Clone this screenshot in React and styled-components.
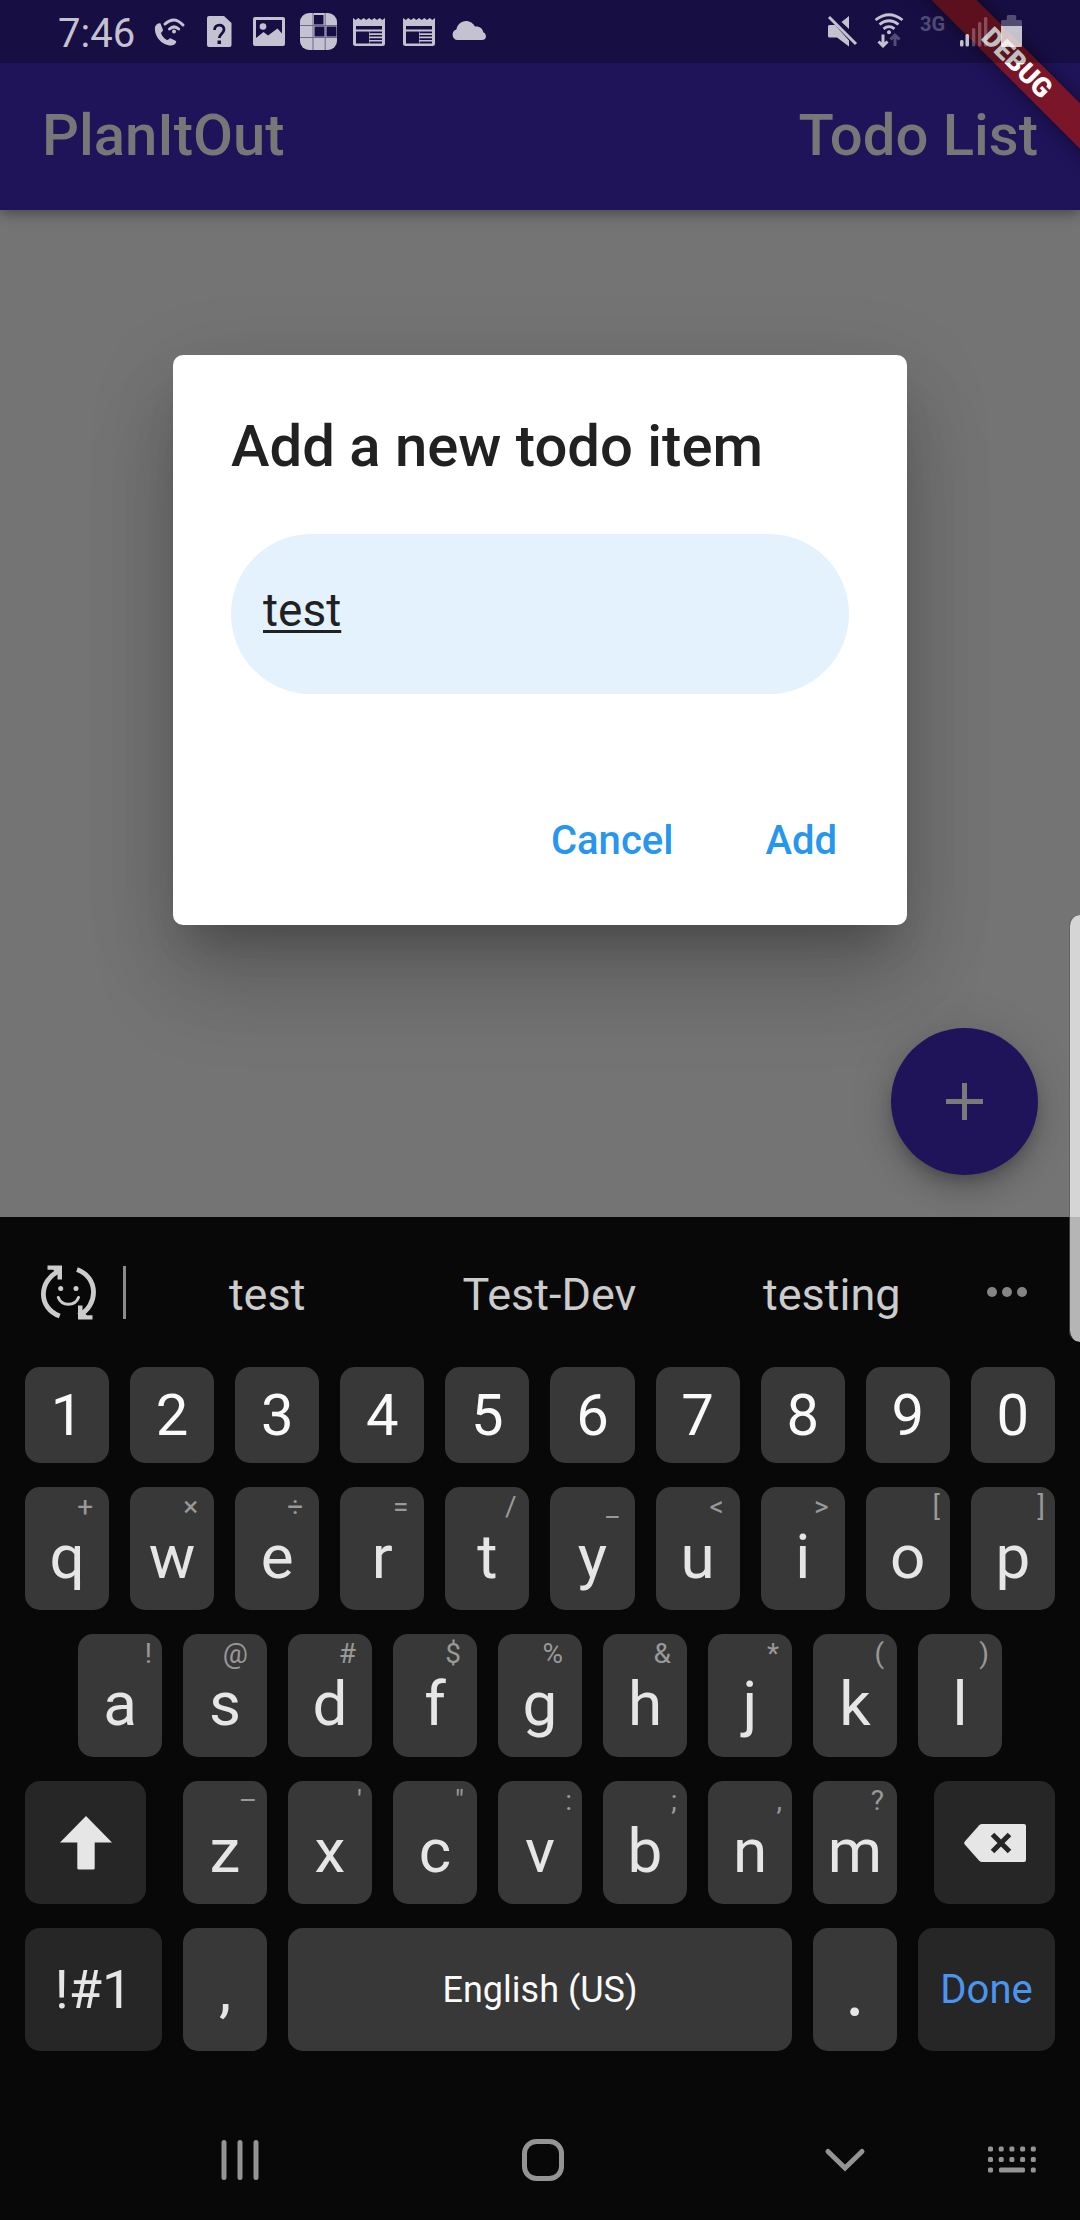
import React, { useState } from 'react';
import styled, { createGlobalStyle } from 'styled-components';

const GlobalStyle = createGlobalStyle`
  *, *::before, *::after { box-sizing: border-box; }
  body {
    margin: 0;
    background: #747474;
    font-family: Roboto, "Noto Sans", sans-serif;
  }
  button, input {
    margin: 0;
    padding: 0;
    border: 0;
    outline: 0;
    background: none;
    color: inherit;
    font: inherit;
  }
  button { cursor: pointer; }
  svg { display: block; flex: none; }
`;

const Page = styled.div`
  position: relative;
  display: flex;
  flex-direction: column;
  min-height: 100vh;
  overflow: hidden;
`;

/* ---------- header ---------- */

const Header = styled.header`
  position: relative;
  background: #1f135a;
  box-shadow: 0 4px 12px rgba(0, 0, 0, 0.35);
`;

const StatusBar = styled.div`
  position: relative;
  z-index: 2;
  display: flex;
  align-items: center;
  justify-content: space-between;
  height: 63px;
  padding: 1px 57px 0 58px;
  background: rgba(0, 0, 0, 0.25);
  color: rgba(255, 255, 255, 0.75);
`;

const StatusGroup = styled.div`
  display: flex;
  align-items: center;
  gap: 12px;
  height: 38px;
`;

const Clock = styled.time`
  padding: 4px 3px 0 0;
  font-size: 40px;
  line-height: 48px;
`;

const NetworkType = styled.span`
  align-self: flex-start;
  width: 28px;
  font-size: 20px;
  font-weight: 700;
  line-height: 22px;
  color: rgba(255, 255, 255, 0.27);
`;

const AppBar = styled.div`
  display: flex;
  align-items: center;
  justify-content: space-between;
  height: 147px;
  padding: 0 42px 3px;
  color: #777777;
`;

const AppTitle = styled.h1`
  margin: 0;
  font-size: 58px;
  font-weight: 500;
  line-height: 68px;
`;

const RibbonCorner = styled.div`
  position: absolute;
  z-index: 1;
  top: 0;
  right: 0;
  width: 210px;
  height: 210px;
  overflow: hidden;
`;

const Ribbon = styled.div`
  position: absolute;
  top: 47px;
  right: -87px;
  width: 300px;
  transform: rotate(45deg);
  background: #7b1628;
  box-shadow: 0 0 16px rgba(0, 0, 0, 0.5);
  color: #ffffff;
  font-size: 27px;
  font-weight: 900;
  line-height: 32px;
  text-align: center;
`;

/* ---------- dialog ---------- */

const Main = styled.main`
  display: flex;
  flex: 1;
  flex-direction: column;
  align-items: center;
  padding-top: 145px;
`;

const Dialog = styled.form`
  width: 100%;
  max-width: 734px;
  border-radius: 10px;
  background: #ffffff;
  box-shadow:
    0 29px 39px -18px rgba(0, 0, 0, 0.2),
    0 63px 90px 0 rgba(0, 0, 0, 0.14),
    0 24px 90px 4px rgba(0, 0, 0, 0.12);
`;

const DialogBody = styled.div`
  display: flex;
  flex-direction: column;
  gap: 55px;
  padding: 58px 58px 0;
`;

const DialogTitle = styled.label`
  color: #212121;
  font-size: 58px;
  font-weight: 500;
  line-height: 66px;
`;

const TodoInput = styled.input`
  width: 100%;
  height: 160px;
  padding: 0 32px 8px;
  border-radius: 80px;
  background: #e3f2fd;
  color: #212121;
  font-size: 46px;
  text-decoration: underline;
  text-decoration-thickness: 3px;
  text-decoration-skip-ink: none;
  text-underline-offset: 4px;
`;

const DialogActions = styled.div`
  display: flex;
  justify-content: flex-end;
  gap: 28px;
  padding: 99px 38px 38px;
`;

const TextButton = styled.button`
  height: 94px;
  padding: 0 32px;
  color: #2796ee;
  font-size: 40px;
  font-weight: 500;
`;

const Fab = styled.button`
  display: grid;
  place-items: center;
  align-self: flex-end;
  width: 147px;
  height: 147px;
  margin: auto 42px 42px;
  border-radius: 50%;
  background: #1f135a;
  box-shadow:
    0 8px 13px -3px rgba(0, 0, 0, 0.2),
    0 16px 26px rgba(0, 0, 0, 0.14),
    0 3px 47px rgba(0, 0, 0, 0.12);
  color: #7a7a7a;
`;

const EdgeHandle = styled.div`
  position: absolute;
  z-index: 3;
  top: 915px;
  right: 0;
  width: 11px;
  height: 427px;
  border-left: 1px solid rgba(90, 90, 90, 0.6);
  border-radius: 16px 0 0 16px;
  background: rgba(255, 255, 255, 0.7);
  background-clip: padding-box;
`;

/* ---------- keyboard ---------- */

const Keyboard = styled.section`
  background: #080808;
  color: #e6e6e6;
`;

const SuggestionBar = styled.div`
  display: flex;
  align-items: center;
  height: 150px;
  padding: 0 52px 0 41px;
  color: #cccccc;
`;

const Divider = styled.span`
  width: 3px;
  height: 53px;
  margin-left: 27px;
  background: #8a8a8a;
`;

const Suggestions = styled.div`
  display: flex;
  flex: 1;
  padding: 6px 13px 0 0;
`;

const Suggestion = styled.button`
  flex: 1 1 0;
  font-size: 45px;
  line-height: 52px;
`;

const IconButton = styled.button`
  color: ${(p) => p.$color || 'inherit'};
`;

const KeyRows = styled.div`
  display: flex;
  flex-direction: column;
  gap: 24px;
  padding: 0 25px;
`;

const KeyRow = styled.div`
  display: flex;
  gap: 21px;
  height: ${(p) => (p.$short ? '96px' : '123px')};
  padding: 0 ${(p) => (p.$inset ? '53px' : '0')};
`;

const Key = styled.button`
  display: flex;
  flex: ${(p) => p.$grow || 84} 1 0;
  align-items: center;
  justify-content: center;
  min-width: 0;
  border-radius: 15px;
  background: ${(p) => (p.$dark ? '#262626' : '#383838')};
  color: ${(p) => p.$color || '#e6e6e6'};
  font-size: ${(p) => p.$size || 58}px;
`;

const ShiftKey = styled(Key)`
  margin-right: 16px;
`;

const BackspaceKey = styled(Key)`
  margin-left: 16px;
`;

const LetterKey = styled(Key)`
  flex-direction: column;
  justify-content: flex-start;
`;

const hintPadding = { thin: '10px', mid: '13px', full: '16px', wide: '19px' };

const Hint = styled.span`
  align-self: flex-end;
  padding-right: ${(p) => hintPadding[p.$fit]};
  color: #999999;
  font-size: 28px;
  line-height: 40px;
`;

const Letter = styled.span`
  font-size: 62px;
  line-height: 60px;
`;

const NavBar = styled.nav`
  display: flex;
  align-items: center;
  height: 120px;
  margin-top: 49px;
  padding: 0 32px 0 204px;
  color: #949494;
`;

const NavMain = styled.div`
  display: flex;
  flex: 1;
  justify-content: space-between;
  margin-right: 95px;
`;

const NavButton = styled.button`
  display: grid;
  place-items: center;
  width: 72px;
  height: 72px;
`;

/* ---------- status icons ---------- */

const StatusIcon = ({ x = 0, width = 38, children }) => (
  <svg width={width} height="38" viewBox={`${x} 13 ${width} 38`} fill="currentColor" aria-hidden="true">
    {children}
  </svg>
);

const WifiCallIcon = () => (
  <StatusIcon x={150}>
    <path d="M155 27c1-3 4-4.500 5.500-3.500l2.500 6.500c.3 1-1.500 2-2 3 1 3 3 5.500 6 7 1.200.4 2.300-2 3.500-1.700l5.500 2.700c1 1.200-1.500 4.500-5 4.500-9 0-17-9-16-18.500z" />
    <path d="M165 24q9-8.500 18 1M169.500 29q4.500-4.200 9.200 0" fill="none" stroke="currentColor" strokeWidth="3" strokeLinecap="round" />
    <circle cx="174" cy="31.500" r="2" />
  </StatusIcon>
);

const UnknownSimIcon = () => (
  <StatusIcon x={200}>
    <path d="M209 16h15l7.500 7v22a2 2 0 0 1-2 2H209a2 2 0 0 1-2-2V18a2 2 0 0 1 2-2z" />
    <path d="M214.500 30c0-6.500 9.500-6.500 9.500-.5 0 4-4.700 4.500-4.700 8.500" fill="none" stroke="#180e43" strokeWidth="2.800" />
    <rect x="217.500" y="40.500" width="3.500" height="3.500" fill="#180e43" />
  </StatusIcon>
);

const ImageIcon = () => (
  <StatusIcon x={250}>
    <path fillRule="evenodd" d="M255 17h28a2 2 0 0 1 2 2v25a2 2 0 0 1-2 2h-28a2 2 0 0 1-2-2V19a2 2 0 0 1 2-2zm1 3v18l7.500-6 4.500 3.500 9.500-7 4.500 5V20z" />
    <circle cx="263" cy="26.500" r="3.300" />
  </StatusIcon>
);

const GridIcon = () => (
  <StatusIcon x={300}>
    <rect x="300" y="13" width="37" height="37" rx="9" />
    <path d="M314 15h9.500v9.500H314zM314.500 26.500h10v10h-10zM326.500 26.500h10v10h-10z" fill="#180e43" />
    <path d="M313 13v37M325.200 13v37M300 25.500h37M300 37.500h37" stroke="#6f688f" strokeWidth="1" />
  </StatusIcon>
);

const NewsIcon = ({ x }) => (
  <StatusIcon x={x}>
    <g transform={`translate(${x} 0)`}>
      <path fillRule="evenodd" d="M3 18l2.700 2 2.600-2 2.700 2 2.700-2 2.600 2 2.700-2 2.700 2 2.600-2 2.700 2 2.700-2 2.600 2 2.700-2v25.500a2.500 2.500 0 0 1-2.500 2.500h-27A2.500 2.500 0 0 1 3 43.500zM6 26v3.500h26V26zm0 5.500v12h13v-12z" />
      <path d="M19.500 31.500H32v1.800H19.500zM19.500 35H32v1.600H19.500zM19.500 38.300H32v1.600H19.500zM19.500 41.600H32v1.900H19.500z" fill="#180e43" />
    </g>
  </StatusIcon>
);

const CloudIcon = () => (
  <StatusIcon x={450}>
    <path d="M457 40a5.500 5.500 0 0 1-.6-10.600c1-4.800 4.600-8.400 9.600-8.400 4 0 7.300 2.300 9 5.600 4.500-.6 7.700 2 8.300 5.600 3.500 1.200 4 7.800-1.300 7.800z" />
  </StatusIcon>
);

const MuteIcon = () => (
  <StatusIcon x={824} width={36}>
    <path d="M849 16v13l-7.500-7zM829.500 25h5.500l14 15.500v6l-12-9h-7.500a1.500 1.500 0 0 1-1.500-1.500v-9.500a1.500 1.500 0 0 1 1.500-1.500z" />
    <path d="M829 17l27 27" stroke="currentColor" strokeWidth="3" />
  </StatusIcon>
);

const WifiIcon = () => (
  <StatusIcon x={872} width={36}>
    <path d="M875.500 20q13.500-10.500 27 0M879.500 24.500q9.500-7.500 19 0M883.500 28.800q5.500-4.300 11 0" fill="none" stroke="currentColor" strokeWidth="2.800" />
    <circle cx="889" cy="32.300" r="2" />
    <path d="M883 34.500V46M878.500 41.500l4.500 4.500 4.500-4.500" fill="none" stroke="currentColor" strokeWidth="3" />
    <path d="M895 46V35M890.500 39.500l4.500-4.500 4.500 4.500" fill="none" stroke="currentColor" strokeWidth="3" opacity="0.350" />
  </StatusIcon>
);

const SignalIcon = () => (
  <StatusIcon x={960} width={29}>
    <rect x="960" y="40" width="3.500" height="6.500" rx="1.500" />
    <rect x="965.500" y="34" width="3.500" height="12.500" rx="1.500" />
    <g opacity="0.350">
      <rect x="972" y="28" width="3.300" height="18.500" rx="1.500" />
      <rect x="978" y="22" width="3.300" height="24.500" rx="1.500" />
      <rect x="984" y="17" width="3.300" height="29.500" rx="1.500" />
    </g>
  </StatusIcon>
);

const BatteryIcon = () => (
  <StatusIcon x={1001} width={22}>
    <path d="M1006.700 20v-3.500a1.500 1.500 0 0 1 1.500-1.500h6.500a1.500 1.500 0 0 1 1.500 1.500V20h4.300a1.500 1.500 0 0 1 1.500 1.500V26h-21v-4.500a1.500 1.500 0 0 1 1.500-1.500z" opacity="0.350" />
    <path d="M1001 26h21v19.500a1.500 1.500 0 0 1-1.500 1.500h-18a1.500 1.500 0 0 1-1.500-1.500z" />
  </StatusIcon>
);

/* ---------- keyboard icons ---------- */

const EmojiSwitchIcon = () => (
  <svg width="55" height="56" viewBox="0 0 55 56" fill="none" stroke="currentColor" aria-hidden="true">
    <path d="M18.500 6.500C-3 17-3 44 18.700 52" strokeWidth="4.800" />
    <path d="M36 5.500c21.500 7.500 22 36 1.500 46" strokeWidth="4.800" />
    <path d="M6.500 1.500h14.500v14h-4.500V9.500L12 5.800H6.500zM37 41.500v14h14.500v-4.300H46l-4.500-3.500v-6.200z" fill="currentColor" stroke="none" />
    <circle cx="19.700" cy="24.500" r="2.500" fill="currentColor" stroke="none" />
    <circle cx="35" cy="24.500" r="2.500" fill="currentColor" stroke="none" />
    <path d="M17.300 33.500c3.500 9 16.700 9 20.200 0" strokeWidth="3" strokeLinecap="round" />
  </svg>
);

const MoreIcon = () => (
  <svg width="42" height="12" viewBox="0 0 42 12" fill="currentColor" aria-hidden="true">
    <circle cx="6" cy="6" r="5" />
    <circle cx="21" cy="6" r="5" />
    <circle cx="36" cy="6" r="5" />
  </svg>
);

const ShiftIcon = () => (
  <svg width="52" height="54" viewBox="0 0 52 54" fill="currentColor" aria-hidden="true">
    <path d="M26 0l26 26.500H34.700V52a1.500 1.500 0 0 1-1.500 1.500H18.800a1.500 1.500 0 0 1-1.500-1.500V26.500H0z" />
  </svg>
);

const BackspaceIcon = () => (
  <svg width="62" height="38" viewBox="0 0 62 38" fill="currentColor" aria-hidden="true">
    <path d="M18 0h42a2 2 0 0 1 2 2v34a2 2 0 0 1-2 2H18q-1.500 0-2.800-1.300L.8 20.500q-1.200-1.500 0-3L15.200 1.300Q16.500 0 18 0z" />
    <path d="M28.500 10.500l17 17M45.500 10.500l-17 17" stroke="#262626" strokeWidth="5" />
  </svg>
);

const RecentsIcon = () => (
  <svg width="38" height="42" viewBox="0 0 38 42" stroke="currentColor" strokeWidth="5" strokeLinecap="round" aria-hidden="true">
    <path d="M3 3.500v35M19 3.500v35M35 3.500v35" />
  </svg>
);

const HomeIcon = () => (
  <svg width="42" height="42" viewBox="0 0 42 42" fill="none" stroke="currentColor" strokeWidth="5" aria-hidden="true">
    <rect x="2.500" y="2.500" width="37" height="37" rx="12" />
  </svg>
);

const ChevronIcon = () => (
  <svg width="42" height="26" viewBox="0 0 42 26" fill="none" stroke="currentColor" strokeWidth="5" strokeLinecap="round" aria-hidden="true">
    <path d="M4 4.500l17 16.500 17-16.500" />
  </svg>
);

const KeyboardIcon = () => (
  <svg width="48" height="28" viewBox="0 0 48 28" fill="currentColor" aria-hidden="true">
    {[0, 10.7, 21.4, 32.1, 42.8].map((x) => (
      <React.Fragment key={x}>
        <rect x={x} y="0.500" width="5" height="5" rx="1.500" />
        <rect x={x} y="11" width="5" height="5" rx="1.500" />
      </React.Fragment>
    ))}
    <rect x="0" y="21.500" width="5" height="5" rx="1.500" />
    <rect x="11" y="21.500" width="26" height="5" rx="1.500" />
    <rect x="42.800" y="21.500" width="5" height="5" rx="1.500" />
  </svg>
);

/* ---------- key data ---------- */

const digits = ['1', '2', '3', '4', '5', '6', '7', '8', '9', '0'];

const topRow = [
  ['q', '+', 'full'], ['w', '×', 'full'], ['e', '÷', 'full'], ['r', '=', 'full'], ['t', '/', 'mid'],
  ['y', '_', 'full'], ['u', '<', 'full'], ['i', '>', 'full'], ['o', '[', 'thin'], ['p', ']', 'thin'],
];

const homeRow = [
  ['a', '!', 'thin'], ['s', '@', 'wide'], ['d', '#', 'full'], ['f', '$', 'full'], ['g', '%', 'wide'],
  ['h', '&', 'full'], ['j', '*', 'mid'], ['k', '(', 'mid'], ['l', ')', 'mid'],
];

const bottomRow = [
  ['z', '–', 'thin'], ['x', "'", 'thin'], ['c', '"', 'mid'], ['v', ':', 'thin'],
  ['b', ';', 'thin'], ['n', ',', 'thin'], ['m', '?', 'mid'],
];

const letterKeys = (row) =>
  row.map(([letter, hint, fit]) => (
    <LetterKey key={letter} type="button">
      <Hint $fit={fit}>{hint}</Hint>
      <Letter>{letter}</Letter>
    </LetterKey>
  ));

export default function App() {
  const [todo, setTodo] = useState('test');

  return (
    <Page>
      <GlobalStyle />
      <Header>
        <StatusBar>
          <StatusGroup>
            <Clock>7:46</Clock>
            <WifiCallIcon />
            <UnknownSimIcon />
            <ImageIcon />
            <GridIcon />
            <NewsIcon x={350} />
            <NewsIcon x={400} />
            <CloudIcon />
          </StatusGroup>
          <StatusGroup>
            <MuteIcon />
            <WifiIcon />
            <NetworkType>3G</NetworkType>
            <SignalIcon />
            <BatteryIcon />
          </StatusGroup>
        </StatusBar>
        <AppBar>
          <AppTitle>PlanItOut</AppTitle>
          <AppTitle as="span">Todo List</AppTitle>
        </AppBar>
        <RibbonCorner>
          <Ribbon>DEBUG</Ribbon>
        </RibbonCorner>
      </Header>

      <Main>
        <Dialog onSubmit={(e) => e.preventDefault()}>
          <DialogBody>
            <DialogTitle htmlFor="todo">Add a new todo item</DialogTitle>
            <TodoInput id="todo" type="text" value={todo} spellCheck={false} onChange={(e) => setTodo(e.target.value)} />
          </DialogBody>
          <DialogActions>
            <TextButton type="button">Cancel</TextButton>
            <TextButton type="submit">Add</TextButton>
          </DialogActions>
        </Dialog>
        <Fab type="button" aria-label="Add todo">
          <svg width="37" height="37" viewBox="0 0 37 37" fill="currentColor" aria-hidden="true">
            <path d="M16 0h5v16h16v5H21v16h-5V21H0v-5h16z" />
          </svg>
        </Fab>
      </Main>

      <Keyboard aria-label="Keyboard">
        <SuggestionBar>
          <IconButton type="button" aria-label="Emoji">
            <EmojiSwitchIcon />
          </IconButton>
          <Divider />
          <Suggestions>
            <Suggestion type="button">test</Suggestion>
            <Suggestion type="button">Test-Dev</Suggestion>
            <Suggestion type="button">testing</Suggestion>
          </Suggestions>
          <IconButton type="button" aria-label="More suggestions" $color="#848484">
            <MoreIcon />
          </IconButton>
        </SuggestionBar>

        <KeyRows>
          <KeyRow $short>
            {digits.map((digit) => (
              <Key key={digit} type="button" $color="#fafafa">{digit}</Key>
            ))}
          </KeyRow>
          <KeyRow>{letterKeys(topRow)}</KeyRow>
          <KeyRow $inset>{letterKeys(homeRow)}</KeyRow>
          <KeyRow>
            <ShiftKey type="button" aria-label="Shift" $dark $grow={121}><ShiftIcon /></ShiftKey>
            {letterKeys(bottomRow)}
            <BackspaceKey type="button" aria-label="Backspace" $dark $grow={121}><BackspaceIcon /></BackspaceKey>
          </KeyRow>
          <KeyRow>
            <Key type="button" $dark $grow={137} $size={54}>!#1</Key>
            <Key type="button" $size={62}>,</Key>
            <Key type="button" $grow={504} $size={36} $color="#fafafa">English (US)</Key>
            <Key type="button" $size={78}>.</Key>
            <Key type="button" $dark $grow={137} $size={40} $color="#4a95f0">Done</Key>
          </KeyRow>
        </KeyRows>

        <NavBar>
          <NavMain>
            <NavButton type="button" aria-label="Recent apps"><RecentsIcon /></NavButton>
            <NavButton type="button" aria-label="Home"><HomeIcon /></NavButton>
            <NavButton type="button" aria-label="Hide keyboard"><ChevronIcon /></NavButton>
          </NavMain>
          <NavButton type="button" aria-label="Change keyboard"><KeyboardIcon /></NavButton>
        </NavBar>
      </Keyboard>

      <EdgeHandle />
    </Page>
  );
}
